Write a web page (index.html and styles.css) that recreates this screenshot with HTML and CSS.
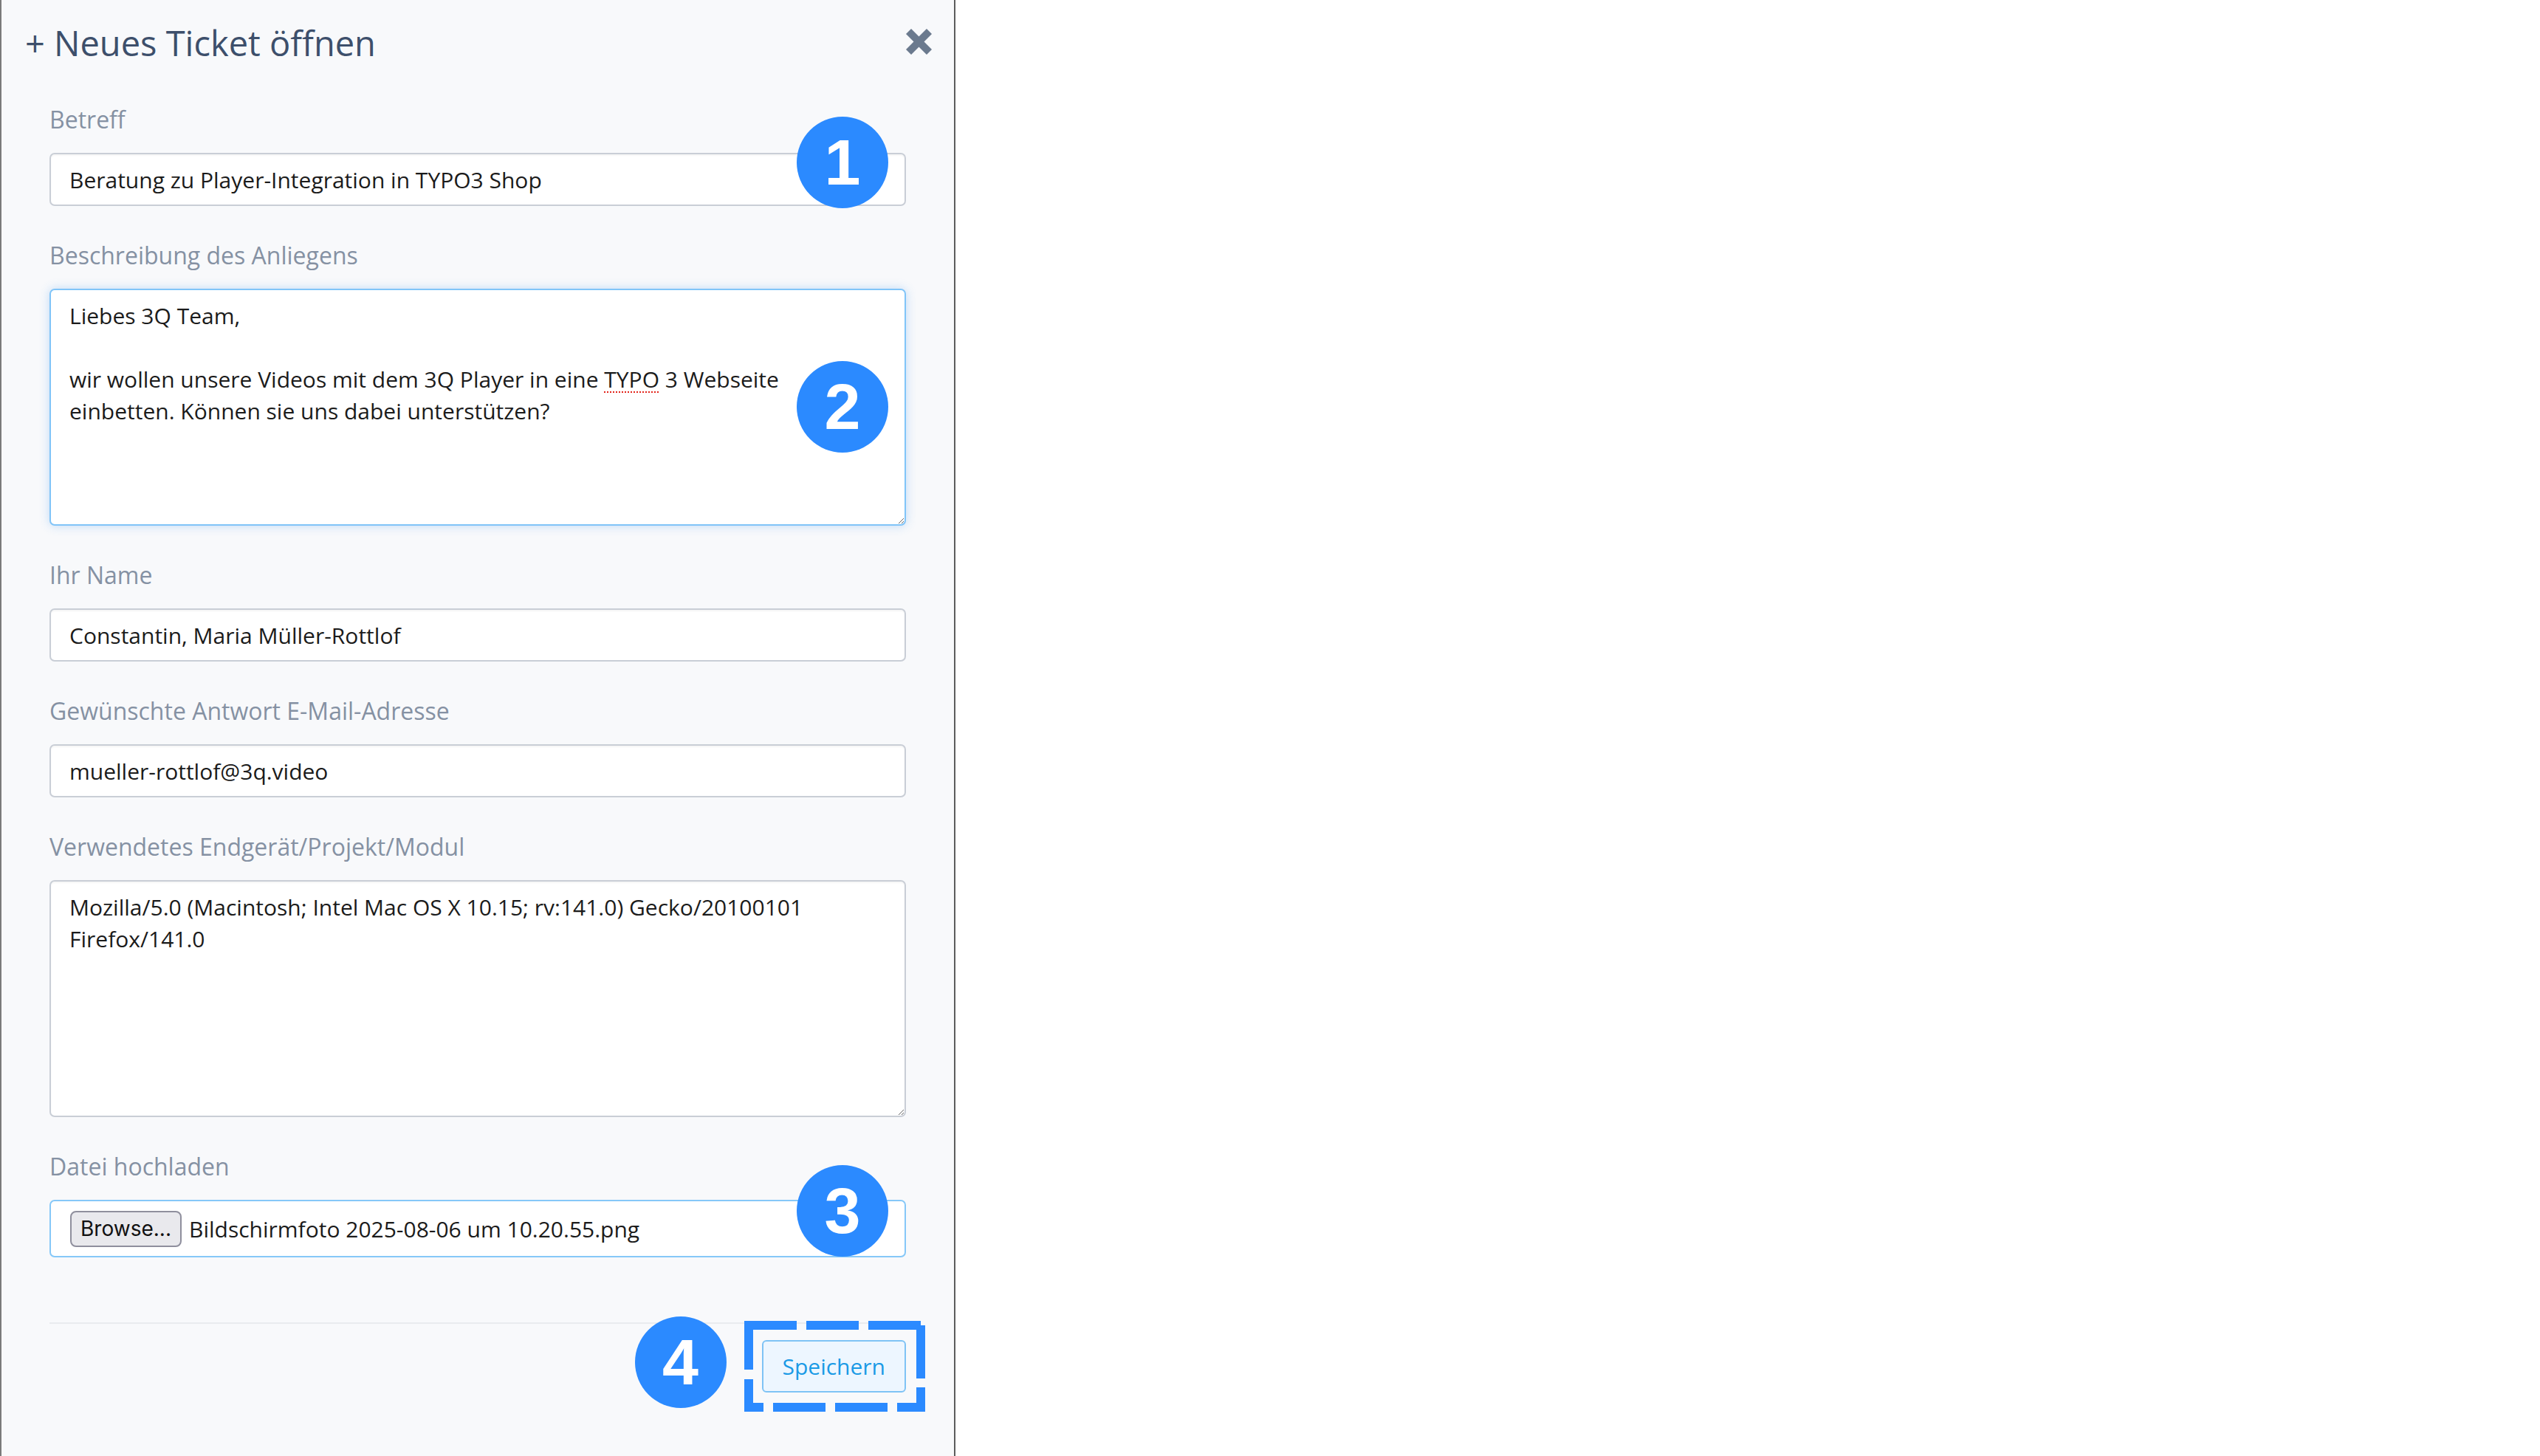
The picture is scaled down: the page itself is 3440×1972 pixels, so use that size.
FILE: index.html
```html
<!DOCTYPE html>
<html lang="de">
<head>
  <meta charset="UTF-8">
  <meta name="viewport" content="width=device-width, initial-scale=1.0">
  <title>Neues Ticket öffnen</title>
  <link rel="stylesheet" href="styles.css">
</head>
<body>

  <div class="panel">
    <div class="panel-header">
      <h2 class="panel-title">+ Neues Ticket öffnen</h2>
      <button class="close-btn" type="button" aria-label="Schließen">
        <svg width="35" height="35" viewBox="0 0 35 35">
          <line x1="3.5" y1="3.5" x2="31.5" y2="31.5" stroke="#6b7a8e" stroke-width="10"/>
          <line x1="31.5" y1="3.5" x2="3.5" y2="31.5" stroke="#6b7a8e" stroke-width="10"/>
        </svg>
      </button>
    </div>

    <form class="ticket-form">
      <div class="form-group">
        <label for="subject">Betreff</label>
        <div class="field">
          <input type="text" id="subject" class="form-control" value="Beratung zu Player-Integration in TYPO3 Shop">
          <span class="step step-1">1</span>
        </div>
      </div>

      <div class="form-group">
        <label>Beschreibung des Anliegens</label>
        <div class="field">
          <div class="form-control textarea focused">Liebes 3Q Team,<br><br>wir wollen unsere Videos mit dem 3Q Player in eine <span class="spell">TYPO</span> 3 Webseite<br>einbetten. Können sie uns dabei unterstützen?</div>
          <span class="step step-2">2</span>
        </div>
      </div>

      <div class="form-group">
        <label for="name">Ihr Name</label>
        <input type="text" id="name" class="form-control" value="Constantin, Maria Müller-Rottlof">
      </div>

      <div class="form-group">
        <label for="email">Gewünschte Antwort E-Mail-Adresse</label>
        <input type="text" id="email" class="form-control" value="mueller-rottlof@3q.video">
      </div>

      <div class="form-group">
        <label>Verwendetes Endgerät/Projekt/Modul</label>
        <div class="form-control textarea">Mozilla/5.0 (Macintosh; Intel Mac OS X 10.15; rv:141.0) Gecko/20100101<br>Firefox/141.0</div>
      </div>

      <div class="form-group">
        <label>Datei hochladen</label>
        <div class="field">
          <div class="form-control file-input">
            <span class="browse-btn">Browse...</span>
            <span class="file-name">Bildschirmfoto 2025-08-06 um 10.20.55.png</span>
          </div>
          <span class="step step-3">3</span>
        </div>
      </div>

      <div class="form-footer">
        <div class="save-wrap">
          <span class="step step-4">4</span>
          <button type="button" class="btn-save">Speichern</button>
          <svg class="focus-frame" width="245" height="123" viewBox="0 0 245 123">
            <path d="M0 6H71M84 6H155M168 6H239
                     M239 6V78M239 90V123
                     M245 117H207M194 117H123M110 117H39M26 117H0
                     M6 123V79M6 66V0"
                  fill="none" stroke="#2b8aff" stroke-width="12"/>
          </svg>
        </div>
      </div>
    </form>
  </div>

</body>
</html>
```

FILE: styles.css
```css
body {
  margin: 0;
  background-color: #fff;
  font-family: "Open Sans", "Noto Sans", sans-serif;
}

.panel {
  width: 1294px;
  height: 100vh;
  box-sizing: border-box;
  background-color: #f8f9fb;
  border-left: 2px solid #7a7a7a;
  border-right: 2px solid #5c5c5c;
}

.panel-header {
  display: flex;
  justify-content: space-between;
  align-items: center;
  padding: 29px 30px 0 32px;
}

.panel-title {
  margin: 0;
  font-size: 47px;
  line-height: 59px;
  font-weight: 400;
  color: #3d4f6b;
}

.close-btn {
  display: flex;
  border: none;
  background: none;
  padding: 0;
  margin-bottom: 5px;
  cursor: pointer;
}

.ticket-form {
  padding: 50px 65px 0;
}

.form-group {
  margin-bottom: 43px;
}

.form-group label {
  display: block;
  font-size: 32px;
  line-height: 48px;
  margin-bottom: 21px;
  color: #8591a3;
}

.field {
  position: relative;
}

.form-control {
  display: block;
  width: 100%;
  height: 72px;
  box-sizing: border-box;
  padding: 0 25px;
  border: 2px solid #c9ced6;
  border-radius: 7px;
  background-color: #fff;
  box-shadow: inset 0 2px 2px rgba(0, 0, 0, 0.04);
  font-family: "Open Sans", sans-serif;
  font-size: 30px;
  color: #1b1b1b;
}

.textarea {
  height: 321px;
  padding: 13px 25px;
  line-height: 43px;
  resize: vertical;
  overflow: auto;
}

.textarea.focused {
  border-color: #80c4f8;
  box-shadow: 0 0 14px rgba(64, 150, 240, 0.3);
}

.spell {
  text-decoration: underline dotted #e3241b;
  text-decoration-thickness: 2px;
  text-underline-offset: 5px;
}

.file-input {
  display: flex;
  align-items: center;
  height: 78px;
  padding: 0 26px;
  border-color: #86c8f8;
  box-shadow: none;
}

.browse-btn {
  display: flex;
  align-items: center;
  justify-content: center;
  width: 151px;
  height: 49px;
  box-sizing: border-box;
  margin-right: 10px;
  border: 2px solid #8f8f9d;
  border-radius: 8px;
  background-color: #e9e9ed;
  font-family: Inter, "Liberation Sans", sans-serif;
  font-size: 28px;
  color: #111;
}

.file-name {
  white-space: nowrap;
}

/* Nummern-Markierungen */
.step {
  position: absolute;
  right: 24px;
  width: 124px;
  height: 124px;
  border-radius: 50%;
  background-color: #2b8aff;
  color: #fff;
  font-family: "Liberation Sans", Arial, sans-serif;
  font-weight: bold;
  font-size: 88px;
  line-height: 1;
  display: flex;
  align-items: center;
  justify-content: center;
}

.step-1 { top: -49px; }
.step-2 { top: 98px; }
.step-3 { top: -47px; }

.step-4 {
  top: -32px;
  right: calc(100% + 48px);
}

.form-footer {
  margin-top: 88px;
  padding-top: 22px;
  border-top: 2px solid #e9ecef;
  display: flex;
  justify-content: flex-end;
}

.save-wrap {
  position: relative;
}

.btn-save {
  display: block;
  height: 71px;
  padding: 0 26px;
  border: 2px solid #7fc3f5;
  border-radius: 6px;
  background-color: #edf6ff;
  color: #1a9ae6;
  font-family: "Open Sans", sans-serif;
  font-size: 30px;
  cursor: pointer;
}

.focus-frame {
  position: absolute;
  left: -24px;
  top: -26px;
  pointer-events: none;
}
```
